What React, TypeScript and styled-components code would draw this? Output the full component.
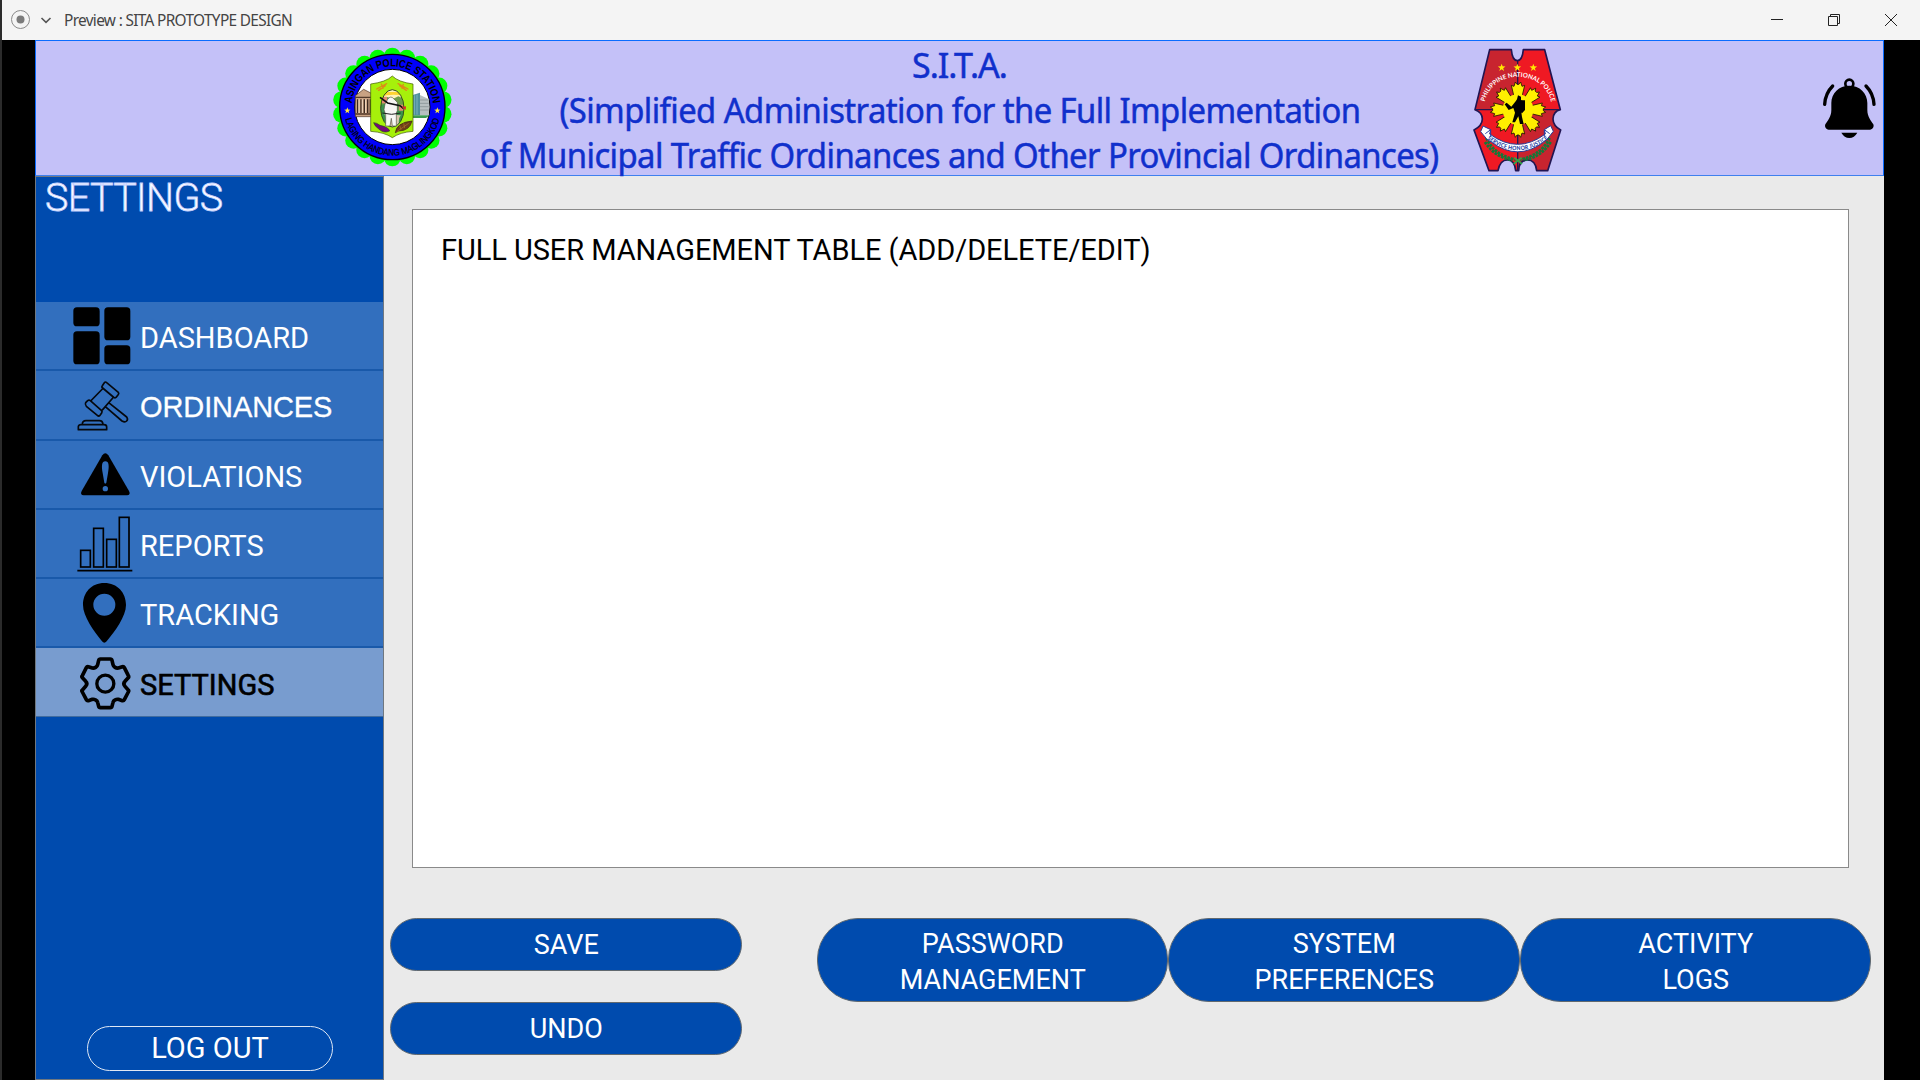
import React from "react";
import styled, { createGlobalStyle } from "styled-components";

const roboto = `Roboto, "Liberation Sans", sans-serif`;
const humanist = `"Noto Sans", "Open Sans", sans-serif`;

const Global = createGlobalStyle`
  * { box-sizing: border-box; }
  body { margin: 0; background: #000; overflow: hidden; }
  svg { display: block; flex: none; }
  button { margin: 0; padding: 0; cursor: pointer; }
`;

const Screen = styled.div`
  width: 1920px;
  height: 1080px;
  display: flex;
  flex-direction: column;
  border-left: 2px solid #2b2b2b;
  background: #000;
  overflow: hidden;
`;

const TitleBar = styled.div`
  height: 40px;
  flex: none;
  display: flex;
  align-items: center;
  background: #f4f4f4;
  padding-left: 8px;
`;

const WindowTitle = styled.span`
  flex: 1;
  margin-left: 10px;
  padding-top: 2px;
  font: 400 15.4px/38px ${humanist};
  letter-spacing: -0.67px;
  color: #444;
  white-space: nowrap;
`;

const WindowControls = styled.div`
  display: flex;
  gap: 45px;
  padding-right: 23px;
`;

const Stage = styled.div`
  flex: 1;
  min-height: 0;
  margin: 0 36px 0 33px;
  display: flex;
  flex-direction: column;
  background: #eaeaea;
`;

const Header = styled.header`
  height: 136px;
  flex: none;
  display: flex;
  align-items: flex-start;
  padding: 6px 0 0 296px;
  border: 1px solid #0a6cff;
  border-bottom-color: #3f80ee;
  background: #c4c1f8;
`;

const SystemTitle = styled.h1`
  flex: none;
  width: 1019px;
  height: 128px;
  margin: -6px 0 0;
  padding: 2px 6px 0 0;
  display: flex;
  flex-direction: column;
  align-items: center;
  color: #1030cc;
  font: 400 34px/45px ${humanist};
`;

const TitleLine = styled.span<{ $spacing: number; $stretch?: number }>`
  white-space: nowrap;
  letter-spacing: ${(p) => p.$spacing}px;
  transform: scaleX(${(p) => p.$stretch ?? 1});
  -webkit-text-stroke: 0.5px #1030cc;
`;

const BellSlot = styled.div`
  padding: 30px 0 0 260px;
`;

const Body = styled.div`
  flex: 1;
  min-height: 0;
  display: flex;
`;

const Sidebar = styled.aside`
  width: 348.5px;
  flex: none;
  display: flex;
  flex-direction: column;
  align-items: stretch;
  background: #004bae;
  border: 1px solid #707880;
`;

const PageName = styled.h2`
  height: 125.3px;
  flex: none;
  margin: 0;
  padding-left: 9px;
  font: 300 39.4px/41px ${roboto};
  letter-spacing: -0.6px;
  color: #fff;
  -webkit-text-stroke: 0.8px #c3d0ff;
`;

const NavItem = styled.a<{ $active?: boolean }>`
  height: 69.2px;
  flex: none;
  display: flex;
  align-items: center;
  background: ${(p) => (p.$active ? "#789ccf" : "#326fbe")};
  border-bottom: ${(p) => (p.$active ? "1px solid #416c9f" : "2px solid #1959aa")};
`;

const NavLabel = styled.span<{ $active?: boolean; $arial?: boolean }>`
  padding-top: ${(p) => (p.$arial ? 3 : p.$active ? 6 : 5)}px;
  font: 400 29px/34px ${(p) => (p.$arial ? `"Liberation Sans", Arial, sans-serif` : roboto)};
  letter-spacing: ${(p) => (p.$arial ? -0.1 : 0)}px;
  color: ${(p) => (p.$active ? "#000" : "#fff")};
  -webkit-text-stroke: ${(p) => (p.$active ? 0.6 : p.$arial ? 0.3 : 0)}px currentColor;
`;

const LogOut = styled.button`
  width: 246px;
  height: 44.5px;
  margin: auto 0 8.5px 51px;
  border: 1px solid #dfe8f5;
  border-radius: 23px;
  background: transparent;
  color: #fff;
  font: 400 29px/42px ${roboto};
`;

const Main = styled.main`
  flex: 1;
  display: flex;
  flex-direction: column;
  padding: 33px 13px 0 6.5px;
`;

const TablePanel = styled.section`
  width: 1437px;
  height: 659px;
  flex: none;
  margin-left: 22px;
  padding: 21px 28px;
  background: #fff;
  border: 1px solid #8a8a8a;
  color: #000;
  font: 400 29px/38px ${roboto};
  letter-spacing: -0.06px;
`;

const Actions = styled.div`
  display: flex;
  align-items: flex-start;
  justify-content: space-between;
  margin-top: 50px;
`;

const EditActions = styled.div`
  display: flex;
  flex-direction: column;
  gap: 31px;
`;

const LinkActions = styled.div`
  display: flex;
`;

const ActionButton = styled.button<{ $tall?: boolean }>`
  width: 351.5px;
  height: ${(p) => (p.$tall ? 84 : 53)}px;
  padding: ${(p) => (p.$tall ? "4px 0 0 1px" : "0 0 0 1px")};
  border: 1px solid #61696f;
  border-radius: ${(p) => (p.$tall ? 41 : 27)}px;
  background: #004bae;
  color: #fff;
  font: 400 27px/36px ${roboto};
  white-space: pre-line;
`;

const Bell = () => (
  <svg width="55" height="63" viewBox="246 231 165 189">
    <circle cx="328" cy="251" r="12" fill="none" stroke="#000" strokeWidth="8" />
    <path d="M328 257C297 257 274 279 274 309V330C274 350 263 362 256 373C253 380 258 389 266 389H390C398 389 403 380 400 373C393 362 382 350 382 330V309C382 279 359 257 328 257Z" />
    <path d="M304 398H352C346 408 338 414 328 414S310 408 304 398Z" />
    <path d="M278 258Q256 280 254 313M378 258Q400 280 402 313" fill="none" stroke="#000" strokeWidth="10" strokeLinecap="round" />
  </svg>
);

const scallops = Array.from({ length: 22 }, (_, i) => {
  const a = (i * Math.PI * 2) / 22 - Math.PI / 2;
  return { x: 217 + Math.cos(a) * 154, y: 213 + Math.sin(a) * 153 };
});

const starPoints = (cx: number, cy: number, r: number) =>
  Array.from({ length: 10 }, (_, i) => {
    const a = (i * Math.PI) / 5 - Math.PI / 2;
    const q = i % 2 ? r * 0.4 : r;
    return `${(cx + Math.cos(a) * q).toFixed(1)},${(cy + Math.sin(a) * q).toFixed(1)}`;
  }).join(" ");

const StationSeal = () => (
  <svg width="121" height="120" viewBox="36 33 363 360">
    <defs>
      <path id="sealTop" d="M95 213A122 122 0 0 1 339 213" />
      <path id="sealBottom" d="M71 213A146 146 0 0 0 363 213" />
      <clipPath id="sealOval"><ellipse cx="217" cy="217" rx="35" ry="56" /></clipPath>
    </defs>
    {scallops.map((s, i) => (
      <circle key={i} cx={s.x} cy={s.y} r="25" fill="#0f0" />
    ))}
    <circle cx="217" cy="213" r="158" fill="#0000fb" stroke="#000" strokeWidth="4" />
    <circle cx="217" cy="213" r="113" fill="#fff" stroke="#000" strokeWidth="3" />
    <g fill="#000" fontFamily="'Liberation Sans Narrow', 'Liberation Sans', sans-serif">
      <text fontWeight="700" fontSize="33" textAnchor="middle" textLength="362" lengthAdjust="spacingAndGlyphs">
        <textPath href="#sealTop" startOffset="50%">ASINGAN POLICE STATION</textPath>
      </text>
      <text fontWeight="400" fontSize="28" stroke="#000" strokeWidth="0.8" textAnchor="middle" textLength="385" lengthAdjust="spacingAndGlyphs">
        <textPath href="#sealBottom" startOffset="50%">LAGING HANDANG MAGLINGKOD</textPath>
      </text>
    </g>
    <polygon points={starPoints(82, 224, 10)} fill="#ffe83a" />
    <polygon points={starPoints(352, 224, 10)} fill="#ffe83a" />
    <path d="M106 179L131 160L160 175V242H106Z" fill="#c9a283" stroke="#4b3325" strokeWidth="2" />
    <path d="M106 184H158M106 234H158" stroke="#52392a" strokeWidth="4" />
    <path d="M113 190V231M123 190V231M133 190V231M143 190V231M151 190V231" stroke="#3d2b22" strokeWidth="4" />
    <path d="M117 190V231M127 190V231M137 190V231" stroke="#f3ddc4" strokeWidth="3" />
    <path d="M276 178L300 170V238H276Z" fill="#4f8f9b" />
    <path d="M300 177L327 190V237H300Z" fill="#b7bfc1" />
    <path d="M283 178V236M291 176V236" stroke="#8fc5cf" strokeWidth="2" />
    <path d="M300 192H326M300 202H326M300 212H326M300 222H326" stroke="#7e8a8c" strokeWidth="2" />
    <path d="M276 238H330L318 246H276Z" fill="#3b9a52" />
    <path d="M217 120Q235 138 279 144V286Q240 289 217 305Q194 289 152 286V144Q198 138 217 120Z" fill="#a6f00b" stroke="#3c5600" strokeWidth="2" />
    <path d="M170 159L200 143M176 163L196 149M184 144L189 157M234 143L264 159M239 149L259 163M250 145L246 157" stroke="#dc8c17" strokeWidth="4" strokeLinecap="round" fill="none" />
    <g clipPath="url(#sealOval)">
      <rect x="180" y="158" width="74" height="120" fill="#fff3b8" />
      <path d="M180 168H254V181Q217 170 180 183Z" fill="#ffd331" />
      <path d="M180 192L203 183L217 190L235 181L254 190V230H180Z" fill="#6e9c4b" />
      <path d="M180 208Q217 195 254 212V280H180Z" fill="#3a944c" />
      <path d="M185 182H201V202H185ZM236 206H251V224H236Z" fill="#e58a72" />
      <path d="M193 235Q201 243 197 279H240Q232 250 242 238Z" fill="#d9c7ad" />
    </g>
    <ellipse cx="217" cy="217" rx="35" ry="56" fill="none" stroke="#335018" strokeWidth="3" />
    <path d="M203 190Q212 177 222 189L232 199V224L229 231V270H217L214 247L210 270H197V236L192 221L195 204Z" fill="#f7f7f4" stroke="#554" strokeWidth="2" />
    <path d="M180 184L203 201L240 209L250 217" fill="none" stroke="#111" strokeWidth="5" />
    <path d="M187 231Q215 239 242 231" fill="none" stroke="#222" strokeWidth="3" />
    <path d="M245 213L258 211L257 222Z" fill="#d92828" />
    <path d="M161 260Q170 260 180 268Q207 274 209 285Q190 294 174 277Q164 270 161 260Z" fill="#73087d" stroke="#25471c" strokeWidth="2" />
    <path d="M226 290Q229 260 276 255Q270 284 236 285Z" fill="#6d3f19" stroke="#38200e" strokeWidth="2" />
    <path d="M229 288L266 262M239 269L243 281M251 262L254 276" stroke="#b4732c" strokeWidth="2" />
  </svg>
);

const badgeShape =
  "M119 41H184Q187 74 202 74T220 41H284L331 221Q310 226 309 249Q309 269 332 282L293 404H260Q257 372 232 372T206 404H197Q194 372 172 372T144 404H117L72 282Q97 269 97 249T75 221Z";

const sunRays = Array.from({ length: 8 }, (_, i) => i * 45);

const PoliceBadge = () => (
  <svg width="90" height="126" viewBox="66 33 270 378">
    <defs>
      <clipPath id="badgeClip"><path d={badgeShape} /></clipPath>
      <path id="badgeArc" d="M104 202C121 96 287 96 304 202" />
      <path id="badgeRibbon" d="M110 296Q203 372 297 296" />
    </defs>
    <g clipPath="url(#badgeClip)">
      <rect x="66" y="33" width="137" height="188" fill="#c8242f" />
      <rect x="203" y="33" width="137" height="188" fill="#ef1923" />
      <rect x="66" y="221" width="137" height="190" fill="#ef1923" />
      <rect x="203" y="221" width="137" height="190" fill="#c8242f" />
      <path d="M203 70V404M75 221H331" stroke="#241550" strokeWidth="4" />
    </g>
    <path d={badgeShape} fill="none" stroke="#211552" strokeWidth="5" strokeLinejoin="round" />
    {[155, 202, 250].map((x) => (
      <polygon key={x} points={starPoints(x, 95, 12)} fill="#ffe800" />
    ))}
    <text fontFamily="Lato, sans-serif" fontWeight="700" fontSize="19" fill="#fff" textAnchor="middle" textLength="270" lengthAdjust="spacingAndGlyphs">
      <textPath href="#badgeArc" startOffset="50%">PHILIPPINE NATIONAL POLICE</textPath>
    </text>
    <g fill="#ffef00" stroke="#221500" strokeWidth="2.5" strokeLinejoin="round">
      {sunRays.map((r) => (
        <path key={r} transform={`rotate(${r} 204 221)`} d="M192 182L184 148L192 151L196 138L201 145H207L212 138L216 151L224 148L216 182Z" />
      ))}
      <circle cx="204" cy="221" r="46" stroke="none" />
    </g>
    <path d="M204 178L213 182L213 193L221 196L222 220L214 229L216 243L221 264H210L205 241L195 259H187L195 230L190 216L176 222L164 205L170 200L184 212L197 196L201 190Z" fill="#000" />
    <path d="M209 193H225V222L216 232L209 226Z" fill="#000" />
    <g fill="none" stroke="#107a38" strokeWidth="8" strokeDasharray="8 3">
      <path d="M109 306Q131 356 197 371" />
      <path d="M299 306Q275 356 210 371" />
      <path d="M105 318Q132 362 187 373" />
      <path d="M302 318Q276 362 221 373" />
    </g>
    <path d="M191 384L215 365M193 365L216 384" stroke="#31a448" strokeWidth="5" />
    <path d="M92 287L99 270L122 281L119 294Q203 356 286 294L283 281L302 269L310 286L292 309L281 318Q203 377 124 318L111 310Z" fill="#fff" stroke="#283b98" strokeWidth="3" strokeLinejoin="round" />
    <path d="M106 293L122 281V302M299 293L283 281V302" fill="none" stroke="#2743a5" strokeWidth="3" />
    <text dy="9" fontFamily="Lato, sans-serif" fontWeight="900" fontSize="18" fill="#2343a4" textAnchor="middle" textLength="188" lengthAdjust="spacingAndGlyphs">
      <textPath href="#badgeRibbon" startOffset="50%">SERVICE HONOR JUSTICE</textPath>
    </text>
  </svg>
);

const NavIcon = ({ top, children }: { top: number; children: React.ReactNode }) => (
  <svg width="104" height="67" viewBox={`48 ${top} 312 201`}>{children}</svg>
);

const DashboardIcon = () => (
  <NavIcon top={397}>
    <rect x="160" y="413" width="79" height="57" rx="11" />
    <rect x="253" y="413" width="78" height="99" rx="11" />
    <rect x="160" y="485" width="79" height="99" rx="11" />
    <rect x="253" y="527" width="78" height="57" rx="11" />
  </NavIcon>
);

const GavelIcon = () => (
  <NavIcon top={605}>
    <g fill="none" stroke="#05080d" strokeWidth="5" strokeLinejoin="round">
      <path d="M247 646L253 637Q256 633 260 637L295 666Q298 670 294 674L288 681Q284 684 280 680L248 653Q244 650 247 646Z" />
      <path d="M197 697L203 691Q207 688 211 691L244 720Q248 724 245 728L240 735Q236 739 232 735L199 708Q194 702 197 697Z" />
      <path d="M250 653L212 692M281 680L246 720M266 697L320 740Q325 747 320 752T306 752L256 709" />
      <path d="M175 778V769Q176 763 183 763H252Q260 763 260 770V778ZM187 762Q187 751 198 751H238Q248 751 249 762" />
    </g>
  </NavIcon>
);

const WarningIcon = () => (
  <NavIcon top={32}>
    <path d="M247 75Q256 63 265 75L327 182Q333 194 321 195H191Q179 194 185 182Z" />
    <path d="M256 93C245 93 244 107 248 128L253 157Q256 162 259 157L264 128C268 107 267 93 256 93Z" fill="#326fbe" />
    <circle cx="256" cy="175" r="8" fill="#326fbe" />
  </NavIcon>
);

const BarsIcon = () => (
  <NavIcon top={240}>
    <g fill="none" stroke="#000" strokeWidth="5">
      <rect x="182" y="361" width="29" height="50" />
      <rect x="221" y="295" width="29" height="116" />
      <rect x="260" y="328" width="29" height="83" />
      <rect x="298" y="262" width="29" height="149" />
      <path d="M172 422H337" />
    </g>
  </NavIcon>
);

const PinIcon = () => (
  <NavIcon top={447}>
    <path fillRule="evenodd" d="M253 459C214 459 189 488 189 525C189 559 222 604 246 634Q253 642 260 634C285 604 318 559 318 525C318 488 292 459 253 459ZM253 491A33 33 0 1 1 253 557A33 33 0 1 1 253 491Z" />
  </NavIcon>
);

const GearIcon = () => (
  <NavIcon top={653}>
    <g fill="none" stroke="#000" strokeWidth="11" strokeLinejoin="round">
      <path d="M241 683H271Q275 683 276 687L279 700Q280 705 285 708Q290 711 295 710L307 706Q311 705 313 709L325 733Q328 737 324 740L315 750Q308 757 315 765L324 775Q328 778 325 782L313 805Q311 809 307 808L295 804Q290 803 285 806Q280 808 279 813L276 825Q275 829 271 829H241Q237 829 236 825L233 813Q232 808 227 806Q222 803 217 804L205 808Q201 809 199 805L187 782Q184 778 188 775L197 765Q204 757 197 750L188 740Q184 737 187 733L199 709Q201 705 205 706L217 710Q222 711 227 708Q232 705 233 700L236 687Q237 683 241 683Z" />
      <circle cx="256" cy="757" r="25.5" strokeWidth="10" />
    </g>
  </NavIcon>
);

const navItems = [
  { label: "DASHBOARD", icon: <DashboardIcon /> },
  { label: "ORDINANCES", icon: <GavelIcon />, arial: true },
  { label: "VIOLATIONS", icon: <WarningIcon /> },
  { label: "REPORTS", icon: <BarsIcon /> },
  { label: "TRACKING", icon: <PinIcon /> },
  { label: "SETTINGS", icon: <GearIcon />, active: true },
];

export default function App() {
  return (
    <>
      <Global />
      <Screen>
        <TitleBar>
          <svg width="44" height="20" viewBox="0 0 44 20" fill="none">
            <circle cx="10.5" cy="9.5" r="9" stroke="#8a8a8a" />
            <circle cx="10.5" cy="9.5" r="4" fill="#7b7b7b" />
            <path d="M31.5 8L36 12.4L40.5 8" stroke="#555" strokeWidth="1.6" />
          </svg>
          <WindowTitle>Preview : SITA PROTOTYPE DESIGN</WindowTitle>
          <WindowControls>
            <svg width="12" height="12" viewBox="0 0 12 12"><path d="M0 5.5H12" stroke="#222" /></svg>
            <svg width="12" height="12" viewBox="0 0 12 12" fill="none" stroke="#222">
              <path d="M.5 2.5H9.5V11.5H.5ZM2.5 2.5V.5H11.5V9.5H9.5" />
            </svg>
            <svg width="12" height="12" viewBox="0 0 12 12"><path d="M0 0L12 12M12 0L0 12" stroke="#222" /></svg>
          </WindowControls>
        </TitleBar>
        <Stage>
          <Header>
            <StationSeal />
            <SystemTitle>
              <TitleLine $spacing={-1}>S.I.T.A.</TitleLine>
              <TitleLine $spacing={-0.6} $stretch={0.965}>(Simplified Administration for the Full Implementation</TitleLine>
              <TitleLine $spacing={-0.6} $stretch={0.966}>of Municipal Traffic Ordinances and Other Provincial Ordinances)</TitleLine>
            </SystemTitle>
            <PoliceBadge />
            <BellSlot><Bell /></BellSlot>
          </Header>
          <Body>
            <Sidebar>
              <PageName>SETTINGS</PageName>
              {navItems.map((n) => (
                <NavItem key={n.label} $active={n.active}>
                  {n.icon}
                  <NavLabel $active={n.active} $arial={n.arial}>{n.label}</NavLabel>
                </NavItem>
              ))}
              <LogOut>LOG OUT</LogOut>
            </Sidebar>
            <Main>
              <TablePanel>FULL USER MANAGEMENT TABLE (ADD/DELETE/EDIT)</TablePanel>
              <Actions>
                <EditActions>
                  <ActionButton>SAVE</ActionButton>
                  <ActionButton>UNDO</ActionButton>
                </EditActions>
                <LinkActions>
                  <ActionButton $tall>{"PASSWORD\nMANAGEMENT"}</ActionButton>
                  <ActionButton $tall>{"SYSTEM\nPREFERENCES"}</ActionButton>
                  <ActionButton $tall>{"ACTIVITY\nLOGS"}</ActionButton>
                </LinkActions>
              </Actions>
            </Main>
          </Body>
        </Stage>
      </Screen>
    </>
  );
}
